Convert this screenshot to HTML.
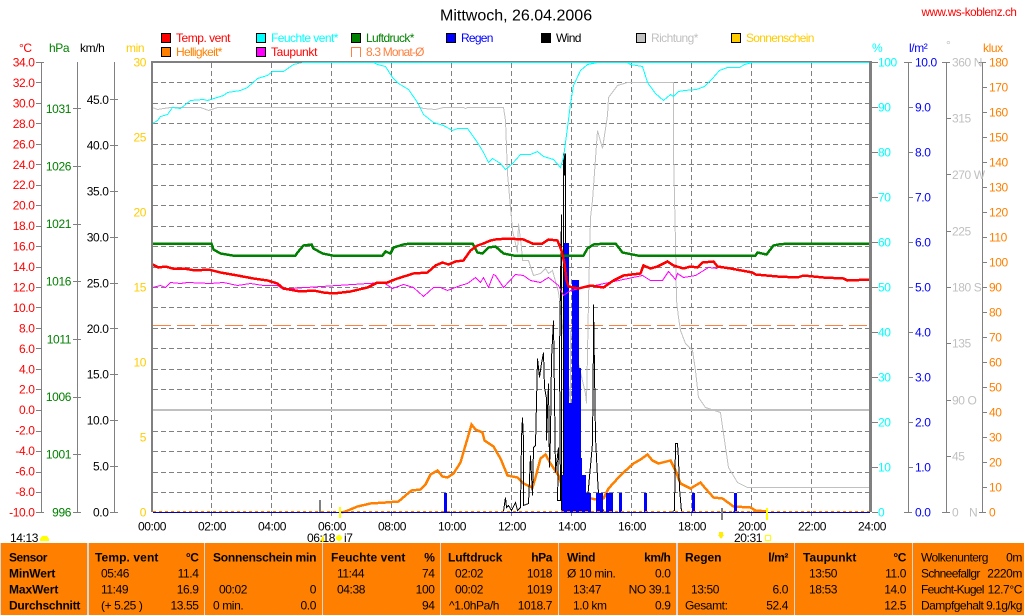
<!DOCTYPE html>
<html><head><meta charset="utf-8"><title>Mittwoch, 26.04.2006</title>
<style>
html,body{margin:0;padding:0;background:#fff;width:1024px;height:615px;overflow:hidden}
svg{display:block;position:absolute;left:0;top:0}
text{font-family:"Liberation Sans",sans-serif;font-size:12px;letter-spacing:-.4px}
.b{font-weight:bold;letter-spacing:.35px}
.e{text-anchor:end}
.c{text-anchor:middle}
</style></head><body>
<svg width="1024" height="615" viewBox="0 0 1024 615" shape-rendering="crispEdges" fill="none">
<!-- grid -->
<path stroke="#808080" stroke-dasharray="5 3" d="M153 82.5H870M153 103.500H870M153 123.500H870M153 144.500H870M153 164.500H870M153 185.500H870M153 205.500H870M153 226.500H870M153 246.500H870M153 267.500H870M153 287.500H870M153 307.500H870M153 328.500H870M153 348.500H870M153 369.500H870M153 389.500H870M153 431.500H870M153 451.500H870M153 472.500H870M153 492.500H870"/>
<path stroke="#808080" stroke-dasharray="5 3" d="M211.500 63V517M271.500 63V517M331.500 63V517M391.500 63V517M451.500 63V517M511.500 63V517M571.500 63V517M631.500 63V517M691.500 63V517M751.500 63V517M811.500 63V517"/>
<path stroke="#c0c0c0" stroke-width="2" d="M152 410H870"/>
<path stroke="#ff8040" stroke-dasharray="18 6" d="M153 325.500H870"/>
<g transform="translate(.5,.5)">
<!-- direction -->
<polyline stroke="#c0c0c0" points="152,107 157,109 163,108 170,107 200,107 208,110 217,107 420,107 423,108 435,109 443,107 463,107 465,108 467,107 503,107 505,120 507,173 510,207 512,230 517,252 518,223 521,247 522,260 528,260 533,275 540,273 545,268 548,273 552,270 558,292 560,307 570,403 570,330 585,393 586,403 587,353 588,300 590,217 592,200 597,130 602,148 607,115 608,97 617,85 627,82 673,82 673,152 675,242 676,300 678,317 680,330 685,343 692,350 695,370 698,397 705,407 720,412 723,433 728,467 737,482 747,487 870,487"/>
<!-- brightness -->
<polyline stroke="#ff8000" stroke-width="2.5" points="341,512 345,511 357,506 370,503 385,502 398,501 405,495 411,490 420,489 425,484 430,474 437,470 442,476 447,477 453,473 460,462 464,448 467,438 471,424 475,429 482,432 484,440 493,446 497,453 500,458 507,475 517,477 523,483 532,487 535,477 540,458 545,454 550,463 558,475 562,487 587,497 595,499 603,498 608,488 618,477 623,472 633,463 640,459 647,454 652,460 658,463 670,460 675,470 680,483 690,488 700,482 705,488 713,497 722,498 733,506 750,507 755,510 767,511"/>
<!-- wind -->
<polyline stroke="#000" points="503,511 505,497 506,507 508,505 511,510 515,502 517,510 520,507 521,438 522,417 523,440 523,505 528,503 530,455 532,495 533,447 535,445 537,358 539,377 541,363 543,352 544,387 546,398 546,440 548,383 549,467 550,435 551,358 553,320 555,472 558,447 557,500 560,500 559,353 561,214 561,510"/>
<path stroke="#000" d="M563 153V512M565 153V512M564 153V175"/>
<polyline stroke="#000" points="586,510 592,443 593,338 593,304 595,437 597,477 598,493 603,511"/>
<polyline stroke="#000" points="672,511 674,510 675,443 677,443 678,458 679,488 681,511"/>
<path stroke="#000" d="M733 511h5"/>
</g>
<!-- rain -->
<path fill="#0000ff" d="M444 493h3v19h-3zM562 475h2v37h-2zM564 243h5v269h-5zM569 403h3v109h-3zM572 280h7v232h-7zM579 368h2v144h-2zM581 458h1v54h-1zM582 475h4v37h-4zM586 493h2v19h-2zM588 493h3v19h-3zM596 493h7v19h-7zM606 493h7v19h-7zM619 493h3v19h-3zM644 493h3v19h-3zM692 493h3v19h-3zM734 493h3v19h-3z"/>
<path stroke="#0000c0" d="M153 512.5H870"/>
<path stroke="#ff8000" stroke-dasharray="3 3" d="M153 511.5H870"/>
<g transform="translate(.5,.5)">
<!-- humidity -->
<polyline stroke="#00ffff" points="152,123 157,120 160,116 167,114 172,107 180,108 190,100 203,99 207,100 223,95 227,92 240,90 247,87 257,78 267,75 272,71 283,71 293,64 302,62 373,62 377,64 385,66 392,77 398,83 408,89 417,102 423,114 433,122 443,125 452,130 457,128 467,128 477,142 483,152 488,162 492,158 500,163 505,169 512,163 520,154 530,154 537,151 543,156 553,159 560,167 563,157 567,127 570,103 573,85 580,70 587,64 597,62 627,62 630,64 642,66 647,82 655,93 663,100 670,94 673,96 678,91 684,90 696,89 704,86 712,78 719,70 727,67 739,67 744,64 752,62 869,62"/>
<!-- dew point -->
<polyline stroke="#ff00ff" points="152,287 160,285 165,287 170,282 180,283 187,282 210,283 223,282 237,285 250,283 263,285 277,285 283,289 290,288 383,282 392,288 403,284 413,287 423,296 433,287 440,287 447,290 460,285 467,283 475,277 480,282 483,277 488,287 493,274 495,275 503,287 515,274 523,275 530,280 540,282 548,277 558,285 563,295 570,290 580,288 642,275 650,280 662,280 668,271 675,279 677,273 683,277 695,275 708,267 717,268"/>
<!-- pressure -->
<polyline stroke="#008000" stroke-width="2.5" points="152,243 211,243 213,249 220,253 232,255 295,255 297,252 303,245 311,244 313,248 322,253 332,255 382,255 385,251 390,253 393,247 403,244 410,243 472,243 477,252 482,253 488,247 495,246 503,253 513,255 583,255 587,248 593,244 605,243 615,243 622,252 637,255 755,255 757,252 766,254 773,245 778,244 788,243 870,243"/>
<!-- temperature -->
<polyline stroke="#ff0000" stroke-width="2.5" points="152,264 158,267 165,266 172,268 183,268 195,270 208,269 220,272 237,275 253,278 267,280 277,283 283,288 300,291 313,290 323,292 333,293 350,291 367,287 377,282 387,282 397,278 413,273 427,272 435,265 442,262 448,264 455,261 463,260 470,250 477,245 483,243 490,240 495,239 507,238 523,239 532,243 542,243 548,239 557,240 561,250 564,263 566,280 568,286 578,288 590,285 603,287 613,280 623,275 640,273 643,265 650,268 657,266 667,261 673,265 683,268 690,266 697,267 702,262 713,261 717,266 730,268 752,272 755,274 777,276 797,277 803,275 823,277 843,278 847,280 870,279"/>
</g>
<!-- plot frame -->
<path stroke="#808080" stroke-width="2" d="M151 62H871M152 61V512"/>
<path stroke="#808080" stroke-width="3" d="M870.500 61V512"/>
<path stroke="#00ffff" d="M302 62.5H869"/>
<!-- markers -->
<path stroke="#808080" stroke-width="2" d="M320 500V512M722 508V520"/>
<path stroke="#ffff00" stroke-width="2" d="M340 507V518M767 508V520"/>
<!-- axes -->
<path stroke="#808080" d="M41.500 62V512M77.500 62V512M114.500 62V512M908.500 62V512M946.500 62V512M982.500 62V512"/>
<path stroke="#808080" d="M36 62.500H44M36 512.500H44M73 512.500H81M110 512.500H118M904 62.500H912M904 512.500H912M942 62.500H950M942 512.500H950M979 62.500H986M979 512.500H986M872 62.500H878M872 512.500H878"/>
<path stroke="#808080" d="M36 82.5H41M36 103.500H41M36 123.500H41M36 144.500H41M36 164.500H41M36 185.500H41M36 205.500H41M36 226.500H41M36 246.500H41M36 267.500H41M36 287.500H41M36 307.500H41M36 328.500H41M36 348.500H41M36 369.500H41M36 389.500H41M36 410.500H41M36 431.500H41M36 451.500H41M36 472.500H41M36 492.500H41"/>
<path stroke="#808080" d="M73 108.500H81M73 166.500H81M73 224.500H81M73 281.500H81M73 339.500H81M73 397.500H81M73 454.500H81M110 99.500H118M110 145.500H118M110 191.500H118M110 237.500H118M110 283.500H118M110 328.500H118M110 374.500H118M110 420.500H118M110 466.500H118"/>
<path stroke="#808080" d="M872 107.500H878M872 152.500H878M872 197.500H878M872 242.500H878M872 287.500H878M872 332.500H878M872 377.500H878M872 422.500H878M872 467.500H878M908 107.500H913M908 152.500H913M908 197.500H913M908 242.500H913M908 287.500H913M908 332.500H913M908 377.500H913M908 422.500H913M908 467.500H913M946 118.500H951M946 174.500H951M946 231.500H951M946 287.500H951M946 343.500H951M946 400.500H951M946 456.500H951"/>
<path stroke="#808080" d="M982 87.500H987M982 112.500H987M982 137.500H987M982 162.500H987M982 187.500H987M982 212.500H987M982 237.500H987M982 262.500H987M982 287.500H987M982 312.500H987M982 337.500H987M982 362.500H987M982 387.500H987M982 412.500H987M982 437.500H987M982 462.500H987M982 487.500H987"/>
<!-- legend -->
<g stroke="#000">
<rect x="161.500" y="33.500" width="9" height="9" fill="#ff0000"/><rect x="161.500" y="47.500" width="9" height="9" fill="#ff8000"/>
<rect x="256.500" y="33.500" width="9" height="9" fill="#00ffff"/><rect x="256.500" y="47.500" width="9" height="9" fill="#ff00ff"/>
<rect x="351.500" y="33.500" width="9" height="9" fill="#008000"/>
<rect x="446.500" y="33.500" width="9" height="9" fill="#0000ff"/>
<rect x="541.500" y="33.500" width="9" height="9" fill="#000"/>
<rect x="636.500" y="33.500" width="9" height="9" fill="#c0c0c0"/>
<rect x="731.500" y="33.500" width="9" height="9" fill="#ffcc00"/>
</g>
<path stroke="#ff8040" d="M351.500 57V47.500H360.500V57"/>
<!-- sun icons -->
<path fill="#ffff00" d="M40 541V539L42 536H47L49 539V541Z"/>
<circle cx="339" cy="538" r="3" fill="#ffff00"/>
<path fill="#ffee00" d="M320 542l3-7 2 7z"/>
<path fill="#ffee00" d="M719 532h4v3h1l-3 4-3-4h1z"/>
<rect x="765.500" y="535.500" width="5" height="5" stroke="#ffff00"/>
<!-- table -->
<rect x="0" y="543" width="1024" height="72" fill="#d8d8d8"/>
<path fill="#ff8000" d="M1 543H87V615H1zM89 543H204V615H89zM205 543H322V615H205zM323 543H440V615H323zM441 543H558V615H441zM559 543H676V615H559zM678 543H794V615H678zM795 543H912V615H795zM913 543H1024V615H913z"/>
<g fill="#ff0000" shape-rendering="auto">
<text x="176" y="42" textLength="54">Temp. vent</text>
<text x="921.500" y="16" textLength="95" lengthAdjust="spacingAndGlyphs">www.ws-koblenz.ch</text>
<text x="271" y="56" textLength="46">Taupunkt</text>
</g>
<g>
<text x="176" y="56" fill="#ff8000" textLength="46">Helligkeit*</text>
<text x="271" y="42" fill="#00ffff" textLength="67">Feuchte vent*</text>
<text x="366" y="42" fill="#008000" textLength="48">Luftdruck*</text>
<text x="366" y="56" fill="#ff8040" textLength="58">8.3 Monat-Ø</text>
<text x="461" y="42" fill="#0000ff" textLength="32">Regen</text>
<text x="556" y="42" fill="#000" textLength="25">Wind</text>
<text x="651" y="42" fill="#c0c0c0" textLength="47">Richtung*</text>
<text x="746" y="42" fill="#ffcc00" textLength="68">Sonnenschein</text>
<text x="440" y="20.500" fill="#000" style="font-size:16px;letter-spacing:0">Mittwoch, 26.04.2006</text>
<text x="19" y="52" fill="#ff0000">°C</text>
<text x="49" y="52" fill="#008000">hPa</text>
<text x="80" y="52" fill="#000">km/h</text>
<text x="126" y="52" fill="#ffcc00">min</text>
<text x="872" y="52" fill="#00ffff">%</text>
<text x="909" y="52" fill="#0000ff">l/m²</text>
<text x="946" y="49" fill="#c0c0c0">°</text>
<text x="983" y="52" fill="#ff8000">klux</text>
</g>
<g transform="translate(0,4.5)">
<g fill="#ff0000" class="e">
<text x="34.500" y="62">34.0</text><text x="34.500" y="82.500">32.0</text><text x="34.500" y="103">30.0</text><text x="34.500" y="123.400">28.0</text><text x="34.500" y="143.800">26.0</text><text x="34.500" y="164.300">24.0</text><text x="34.500" y="184.700">22.0</text><text x="34.500" y="205.200">20.0</text><text x="34.500" y="225.600">18.0</text><text x="34.500" y="246.100">16.0</text><text x="34.500" y="266.500">14.0</text><text x="34.500" y="287">12.0</text><text x="34.500" y="307.400">10.0</text><text x="34.500" y="327.900">8.0</text><text x="34.500" y="348.300">6.0</text><text x="34.500" y="368.800">4.0</text><text x="34.500" y="389.200">2.0</text><text x="34.500" y="409.700">0.0</text><text x="34.500" y="430.100">-2.0</text><text x="34.500" y="450.600">-4.0</text><text x="34.500" y="471">-6.0</text><text x="34.500" y="491.500">-8.0</text><text x="34.500" y="512">-10.0</text>
</g>
<g fill="#008000" class="e">
<text x="71" y="108.500">1031</text><text x="71" y="166">1026</text><text x="71" y="223.500">1021</text><text x="71" y="281">1016</text><text x="71" y="339">1011</text><text x="71" y="396.500">1006</text><text x="71" y="454">1001</text><text x="71" y="512">996</text>
</g>
<g fill="#000" class="e">
<text x="108.500" y="99.500">45.0</text><text x="108.500" y="145">40.0</text><text x="108.500" y="191">35.0</text><text x="108.500" y="237">30.0</text><text x="108.500" y="283">25.0</text><text x="108.500" y="328.500">20.0</text><text x="108.500" y="374">15.0</text><text x="108.500" y="420">10.0</text><text x="108.500" y="466">5.0</text><text x="108.500" y="512">0.0</text>
</g>
<g fill="#ffcc00" class="e">
<text x="146" y="62">30</text><text x="146" y="137">25</text><text x="146" y="212">20</text><text x="146" y="287">15</text><text x="146" y="362">10</text><text x="146" y="437">5</text><text x="146" y="512">0</text>
</g>
<g fill="#00ffff">
<text x="878" y="62">100</text><text x="878" y="107">90</text><text x="878" y="152">80</text><text x="878" y="197">70</text><text x="878" y="242">60</text><text x="878" y="287">50</text><text x="878" y="332">40</text><text x="878" y="377">30</text><text x="878" y="422">20</text><text x="878" y="467">10</text><text x="878" y="512">0</text>
</g>
<g fill="#0000ff">
<text x="915" y="62">10.0</text><text x="915" y="107">9.0</text><text x="915" y="152">8.0</text><text x="915" y="197">7.0</text><text x="915" y="242">6.0</text><text x="915" y="287">5.0</text><text x="915" y="332">4.0</text><text x="915" y="377">3.0</text><text x="915" y="422">2.0</text><text x="915" y="467">1.0</text><text x="915" y="512">0.0</text>
</g>
<g fill="#c0c0c0">
<text x="952" y="62">360 N</text><text x="952" y="118">315</text><text x="952" y="174.500">270 W</text><text x="952" y="231">225</text><text x="952" y="287">180 S</text><text x="952" y="343">135</text><text x="952" y="400">90  O</text><text x="952" y="456">45</text><text x="952" y="512">0</text><text x="969" y="512">N</text>
</g>
<g fill="#ff8000">
<text x="989" y="62">180</text><text x="989" y="87">170</text><text x="989" y="112">160</text><text x="989" y="137">150</text><text x="989" y="162">140</text><text x="989" y="187">130</text><text x="989" y="212">120</text><text x="989" y="237">110</text><text x="989" y="262">100</text><text x="989" y="287">90</text><text x="989" y="312">80</text><text x="989" y="337">70</text><text x="989" y="362">60</text><text x="989" y="387">50</text><text x="989" y="412">40</text><text x="989" y="437">30</text><text x="989" y="462">20</text><text x="989" y="487">10</text><text x="989" y="512">0</text>
</g>
</g>
<g fill="#000" class="c">
<text x="152" y="530.500">00:00</text><text x="212" y="530.500">02:00</text><text x="272" y="530.500">04:00</text><text x="332" y="530.500">06:00</text><text x="392" y="530.500">08:00</text><text x="452" y="530.500">10:00</text><text x="512" y="530.500">12:00</text><text x="572" y="530.500">14:00</text><text x="632" y="530.500">16:00</text><text x="692" y="530.500">18:00</text><text x="752" y="530.500">20:00</text><text x="812" y="530.500">22:00</text><text x="872" y="530.500">24:00</text>
</g>
<g fill="#000">
<text x="10" y="542">14:13</text><text x="307" y="542">06:18</text><text x="344" y="542">i7</text><text x="734" y="542">20:31</text>
<g class="b">
<text x="9" y="561.500" textLength="38">Sensor</text><text x="9" y="577.500" textLength="46">MinWert</text><text x="9" y="593.500" textLength="49">MaxWert</text><text x="9" y="609.500" textLength="71">Durchschnitt</text>
<text x="95" y="561.500" textLength="63">Temp. vent</text><text x="213" y="561.500" textLength="103">Sonnenschein min</text><text x="331" y="561.500" textLength="74">Feuchte vent</text><text x="448" y="561.500" textLength="54">Luftdruck</text><text x="567" y="561.500" textLength="28">Wind</text><text x="685" y="561.500" textLength="36">Regen</text><text x="803" y="561.500" textLength="53">Taupunkt</text>
</g>
<g class="b e">
<text x="198.500" y="561.500">°C</text><text x="434.500" y="561.500">%</text><text x="552" y="561.500">hPa</text><text x="670.500" y="561.500">km/h</text><text x="788" y="561.500">l/m²</text><text x="906" y="561.500">°C</text>
</g>
<text x="101" y="577.500">05:46</text><text x="101" y="593.500">11:49</text><text x="101" y="609.500">(+ 5.25 )</text>
<text x="219" y="593.500">00:02</text><text x="213" y="609.500">0 min.</text>
<text x="337" y="577.500">11:44</text><text x="337" y="593.500">04:38</text>
<text x="455" y="577.500">02:02</text><text x="455" y="593.500">00:02</text><text x="449" y="609.500">^1.0hPa/h</text>
<text x="567" y="577.500">Ø 10 min.</text><text x="573" y="593.500">13:47</text><text x="573" y="609.500">1.0 km</text>
<text x="691" y="593.500">13:50</text><text x="685" y="609.500">Gesamt:</text>
<text x="809" y="577.500">13:50</text><text x="809" y="593.500">18:53</text>
<text x="921" y="561.500" textLength="67">Wolkenunterg</text><text x="921" y="577.500" textLength="59">Schneefallgr</text><text x="921" y="593.500" textLength="63">Feucht-Kugel</text><text x="921" y="609.500" textLength="101">Dampfgehalt 9.1g/kg</text>
<g class="e">
<text x="198.500" y="577.500">11.4</text><text x="198.500" y="593.500">16.9</text><text x="198.500" y="609.500">13.55</text>
<text x="316" y="593.500">0</text><text x="316" y="609.500">0.0</text>
<text x="434.500" y="577.500">74</text><text x="434.500" y="593.500">100</text><text x="434.500" y="609.500">94</text>
<text x="552" y="577.500">1018</text><text x="552" y="593.500">1019</text><text x="552" y="609.500">1018.7</text>
<text x="670.500" y="577.500">0.0</text><text x="670.500" y="593.500">NO 39.1</text><text x="670.500" y="609.500">0.9</text>
<text x="788" y="593.500">6.0</text><text x="788" y="609.500">52.4</text>
<text x="906" y="577.500">11.0</text><text x="906" y="593.500">14.0</text><text x="906" y="609.500">12.5</text>
<text x="1022" y="561.500">0m</text><text x="1022" y="577.500">2220m</text><text x="1022" y="593.500">12.7°C</text>
</g>
</g>
</svg>
</body></html>
